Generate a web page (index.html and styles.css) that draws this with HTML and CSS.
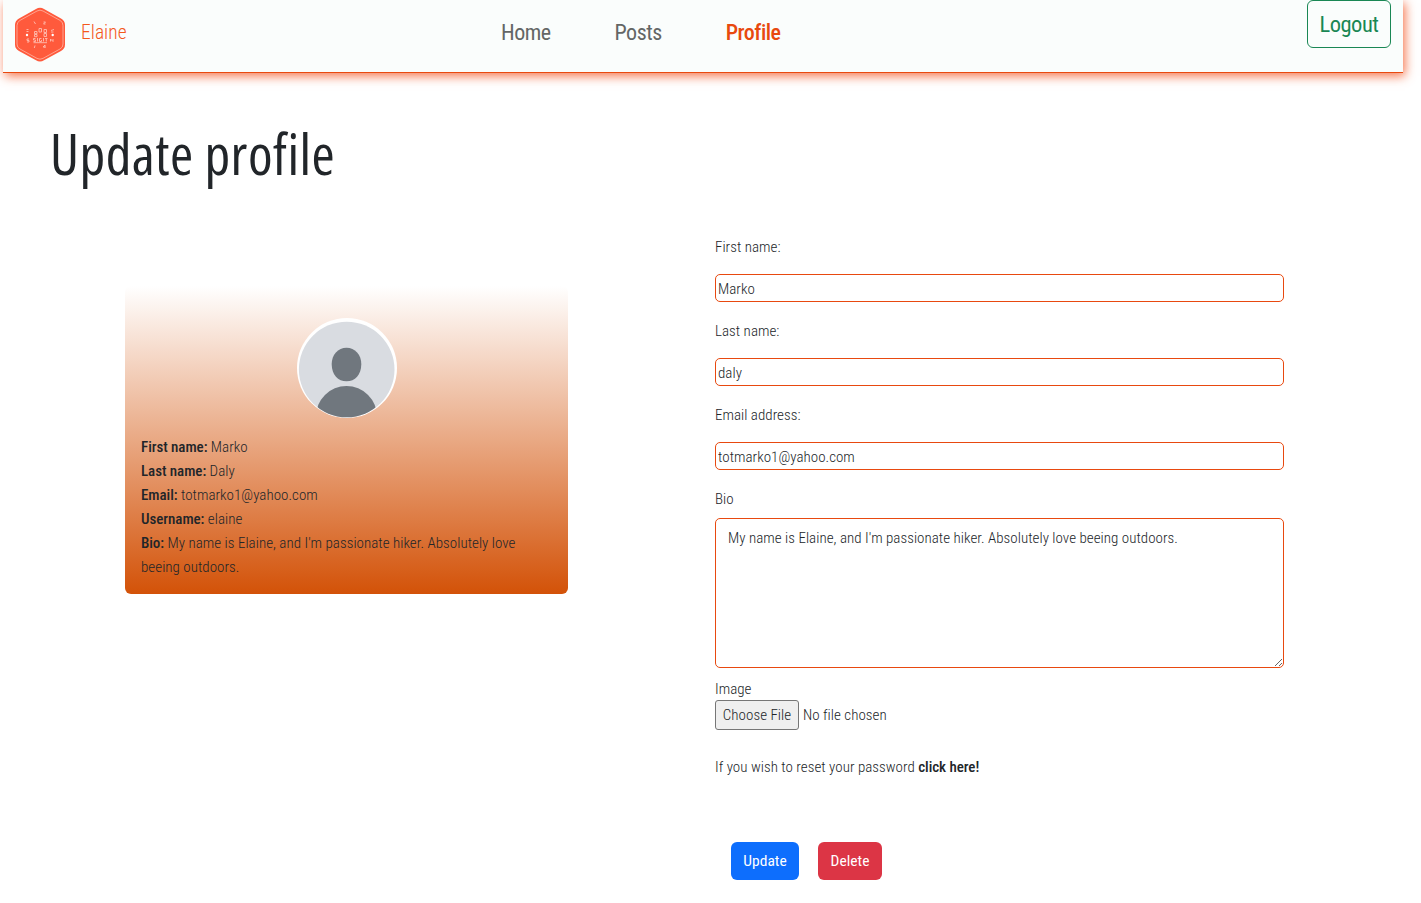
FILE: index.html
```
<!DOCTYPE html>
<html lang="en">
<head>
<meta charset="utf-8">
<title>Update profile</title>
<link rel="stylesheet" href="styles.css">
</head>
<body>
<header class="navbar">
  <a class="brand" href="#">
    <svg class="logo" width="52" height="56" viewBox="0 0 52 56">
      <path d="M22 1.900Q26-.3 30 1.900L47 11.500Q51 13.600 51 18V37.500Q51 41.800 47 44L30 53.300Q26 55.700 22 53.300L5 44Q1 41.800 1 37.500V18Q1 13.600 5 11.500Z" fill="#ff5a3c"/>
      <path d="M23 4Q26 2.300 29 4L46 13.400Q49 15 49 18.500V37Q49 40.500 46 42L29 51.400Q26 53 23 51.400L6 42Q3 40.500 3 37V18.500Q3 15 6 13.400Z" fill="none" stroke="#ffb5a5" stroke-width=".8"/>
      <g fill="none" stroke="#ffd9d0" stroke-width=".9" opacity=".8">
        <path d="M20 14.500l1.500 2.500M29.500 15h2l-2 2h2M12.500 22.500h2M12.500 24.500h2M37 23.500l3-1M37 25h2.500M15 32h-2v1.500h2V35h-2M36.500 34.500V32l2.500 2.500V32M21 38.500l-.7 2.500M31 41v-3l-2 2h2.500"/>
        <path d="M20.500 24.500h2.500v2.200h-2.500zM20.500 27.500h2.500v2.200h-2.500zM25 21.500h2.500V25H25zM30 22.500h2.500v3H30zM30 26.500h2.500v3H30z"/>
        <path d="M21.500 31.500h-2V33h2v1.500h-2M23.500 31v3.500M27.500 31.500h-2v3h2V33M29.500 31v3.500M31 31.500h2.500M32.300 31.500v3M19.500 35.700h13.500"/>
      </g>
      <g fill="#fff"><circle cx="13" cy="28" r="1.200"/><circle cx="38.700" cy="28" r="1.200"/></g>
    </svg>
    <span>Elaine</span>
  </a>
  <nav class="menu">
    <a href="#">Home</a>
    <a href="#">Posts</a>
    <a href="#" class="active">Profile</a>
  </nav>
  <button class="btn logout">Logout</button>
</header>
<h1 class="title">Update profile</h1>
<main class="columns">
  <section class="card">
    <svg class="avatar" width="100" height="100" viewBox="0 0 100 100">
      <circle cx="50" cy="50" r="50" fill="#fff"/>
      <clipPath id="face"><circle cx="49.700" cy="51.500" r="47.800"/></clipPath>
      <g clip-path="url(#face)">
        <path fill="#d9dce1" d="M0 0h100v100H0z"/>
        <path fill="#70777e" d="M49.500 29.800C58 29.800 64.300 37 64.300 46C64.300 57 58 63.300 49.500 63.300S34.700 57 34.700 46C34.700 37 41 29.800 49.500 29.800Z"/>
        <circle cx="49.500" cy="98.500" r="30.500" fill="#70777e"/>
      </g>
    </svg>
    <p><b>First name:</b> Marko</p>
    <p><b>Last name:</b> Daly</p>
    <p><b>Email:</b> totmarko1@yahoo.com</p>
    <p><b>Username:</b> elaine</p>
    <p><b>Bio:</b> My name is Elaine, and I'm passionate hiker. Absolutely love beeing outdoors.</p>
  </section>
  <form class="form">
    <label for="first">First name:</label>
    <input id="first" type="text" value="Marko">
    <label for="last">Last name:</label>
    <input id="last" type="text" value="daly">
    <label for="email">Email address:</label>
    <input id="email" type="text" value="totmarko1@yahoo.com">
    <label for="bio" class="bio-label">Bio</label>
    <textarea id="bio" spellcheck="false">My name is Elaine, and I'm passionate hiker. Absolutely love beeing outdoors.</textarea>
    <label for="image" class="image-label">Image</label>
    <div class="file"><button type="button" id="image">Choose File</button><span>No file chosen</span></div>
    <p class="reset">If you wish to reset your password <b>click here!</b></p>
    <div class="actions">
      <button type="button" class="btn update">Update</button>
      <button type="button" class="btn delete">Delete</button>
    </div>
  </form>
</main>
</body>
</html>
```
FILE: styles.css
```
* { box-sizing: border-box; }

body {
  margin: 0;
  background: #fff;
  color: #212529;
  font: 300 15px/24px Roboto, "Open Sans", sans-serif;
  font-stretch: 75%;
  letter-spacing: .03px;
}

p { margin: 0; }

b {
  font-weight: 500;
  letter-spacing: -.05px;
}

a {
  color: inherit;
  text-decoration: none;
}

button, input, textarea {
  font: inherit;
  font-stretch: inherit;
  letter-spacing: inherit;
  color: inherit;
}

.navbar {
  display: flex;
  justify-content: space-between;
  align-items: flex-start;
  width: 1400px;
  height: 73px;
  margin-left: 3px;
  padding: 0 12px 0 11px;
  background: #fafdfc;
  border-bottom: 1px solid #e8490f;
  box-shadow: 2px 3px 10px #f4511ecc;
}

.brand {
  display: flex;
  gap: 15px;
  width: 487px;
  padding-top: 7px;
  color: #f4581c;
  font-size: 19.5px;
  line-height: 52px;
}

.menu {
  display: flex;
  flex: 1;
  gap: 64px;
  color: #636665;
  font-size: 22px;
  font-weight: 400;
  letter-spacing: -.5px;
  line-height: 65px;
}

.menu .active {
  color: #e8490f;
  font-weight: 500;
}

.btn {
  padding: 0;
  border: 1px solid transparent;
  border-radius: 6px;
}

.logout {
  width: 84px;
  height: 48px;
  border-color: #198754;
  background: transparent;
  color: #198754;
  font-size: 22.5px;
  font-weight: 400;
  letter-spacing: -.5px;
}

.title {
  margin: 44px 0 0 50px;
  font: 400 56px/72px "Open Sans", sans-serif;
  font-stretch: 75%;
  letter-spacing: .5px;
}

.columns {
  display: flex;
  align-items: flex-start;
  gap: 147px;
  padding: 46px 0 0 125px;
}

.card {
  width: 443px;
  height: 308px;
  margin-top: 51px;
  padding: 32px 16px 0;
  border-radius: 6px;
  background: linear-gradient(#fff, #d35208);
}

.avatar {
  display: block;
  margin: 0 auto 17px;
}

.form {
  display: flex;
  flex-direction: column;
  width: 569px;
}

.form label { height: 39px; }

.form input {
  height: 28px;
  margin-bottom: 17px;
  padding: 3px 2px 1px;
  border: 1px solid #e8490f;
  border-radius: 5px;
  background: #fff;
  outline: 0;
}

.form .bio-label { height: 31px; }

.form textarea {
  display: block;
  height: 150px;
  padding: 7px 12px;
  border: 1px solid #e8490f;
  border-radius: 5px;
  background: #fff;
  outline: 0;
}

.form .image-label {
  height: 23px;
  margin-top: 9px;
}

.file {
  display: flex;
  gap: 4px;
  line-height: 31px;
}

.file button {
  width: 84px;
  height: 30px;
  padding: 0;
  border: 1px solid #767676;
  border-radius: 3px;
  background: #efefef;
  line-height: 28px;
}

.reset { margin-top: 24px; }

.actions {
  display: flex;
  gap: 19px;
  margin: 63px 0 0 16px;
}

.actions .btn {
  height: 38px;
  color: #fff;
  font-size: 15.5px;
  font-weight: 400;
}

.update {
  width: 68px;
  background: #0d6efd;
}

.delete {
  width: 64px;
  background: #dc3545;
}
```
